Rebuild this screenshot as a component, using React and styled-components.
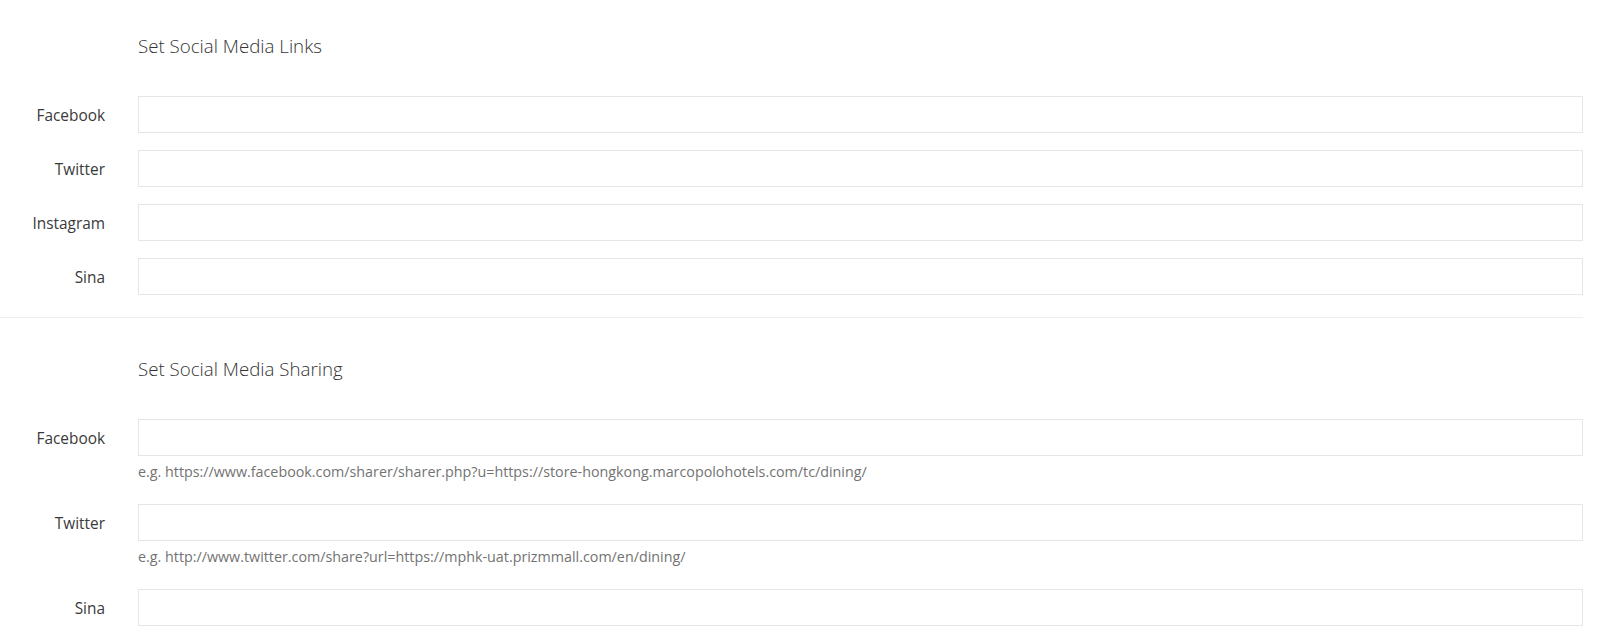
import React from 'react';
import styled, { createGlobalStyle } from 'styled-components';

const GlobalStyle = createGlobalStyle`
  body {
    margin: 0;
    background: #fff;
    font-family: "Open Sans", "Liberation Sans", sans-serif;
    color: #333;
  }
`;

const Page = styled.div`
  padding-right: 17px;
`;

const Section = styled.section`
  padding-top: ${(p) => p.top}px;
  padding-bottom: ${(p) => p.bottom}px;
  border-bottom: ${(p) => (p.divider ? '1px solid #efefef' : 'none')};
`;

const Row = styled.div`
  display: grid;
  grid-template-columns: 138px 1fr;
  margin-bottom: ${(p) => (p.last ? 0 : 17)}px;
`;

const Title = styled.h3`
  grid-column: 2;
  margin: 0 0 37px;
  font-size: 18.7px;
  line-height: 26px;
  font-weight: 300;
  color: #333;
`;

const Label = styled.label`
  box-sizing: border-box;
  height: 37px;
  padding-top: 2px;
  display: flex;
  align-items: center;
  justify-content: flex-end;
  padding-right: 33px;
  font-size: 15.4px;
  color: #3a3a3a;
`;

const Field = styled.div`
  display: flex;
  flex-direction: column;
`;

const Input = styled.input`
  box-sizing: border-box;
  height: 37px;
  width: 100%;
  border: 1px solid #e6e6e6;
  border-radius: 0;
  background: #fff;
  padding: 6px 12px;
  font-family: inherit;
  font-size: 14px;
  outline: none;
`;

const Help = styled.p`
  margin: 7px 0 6px;
  font-size: 14.3px;
  line-height: 18px;
  color: #737373;
`;

const links = ['Facebook', 'Twitter', 'Instagram', 'Sina'];

const sharing = [
  {
    name: 'Facebook',
    help: 'e.g. https://www.facebook.com/sharer/sharer.php?u=https://store-hongkong.marcopolohotels.com/tc/dining/',
  },
  {
    name: 'Twitter',
    help: 'e.g. http://www.twitter.com/share?url=https://mphk-uat.prizmmall.com/en/dining/',
  },
  { name: 'Sina' },
];

export default function App() {
  return (
    <Page>
      <GlobalStyle />
      <Section top={33} bottom={22} divider>
        <Row last>
          <Title>Set Social Media Links</Title>
        </Row>
        {links.map((name, i) => (
          <Row key={name} last={i === links.length - 1}>
            <Label>{name}</Label>
            <Field>
              <Input type="text" />
            </Field>
          </Row>
        ))}
      </Section>
      <Section top={38} bottom={15}>
        <Row last>
          <Title>Set Social Media Sharing</Title>
        </Row>
        {sharing.map((item, i) => (
          <Row key={item.name} last={i === sharing.length - 1}>
            <Label>{item.name}</Label>
            <Field>
              <Input type="text" />
              {item.help && <Help>{item.help}</Help>}
            </Field>
          </Row>
        ))}
      </Section>
    </Page>
  );
}
